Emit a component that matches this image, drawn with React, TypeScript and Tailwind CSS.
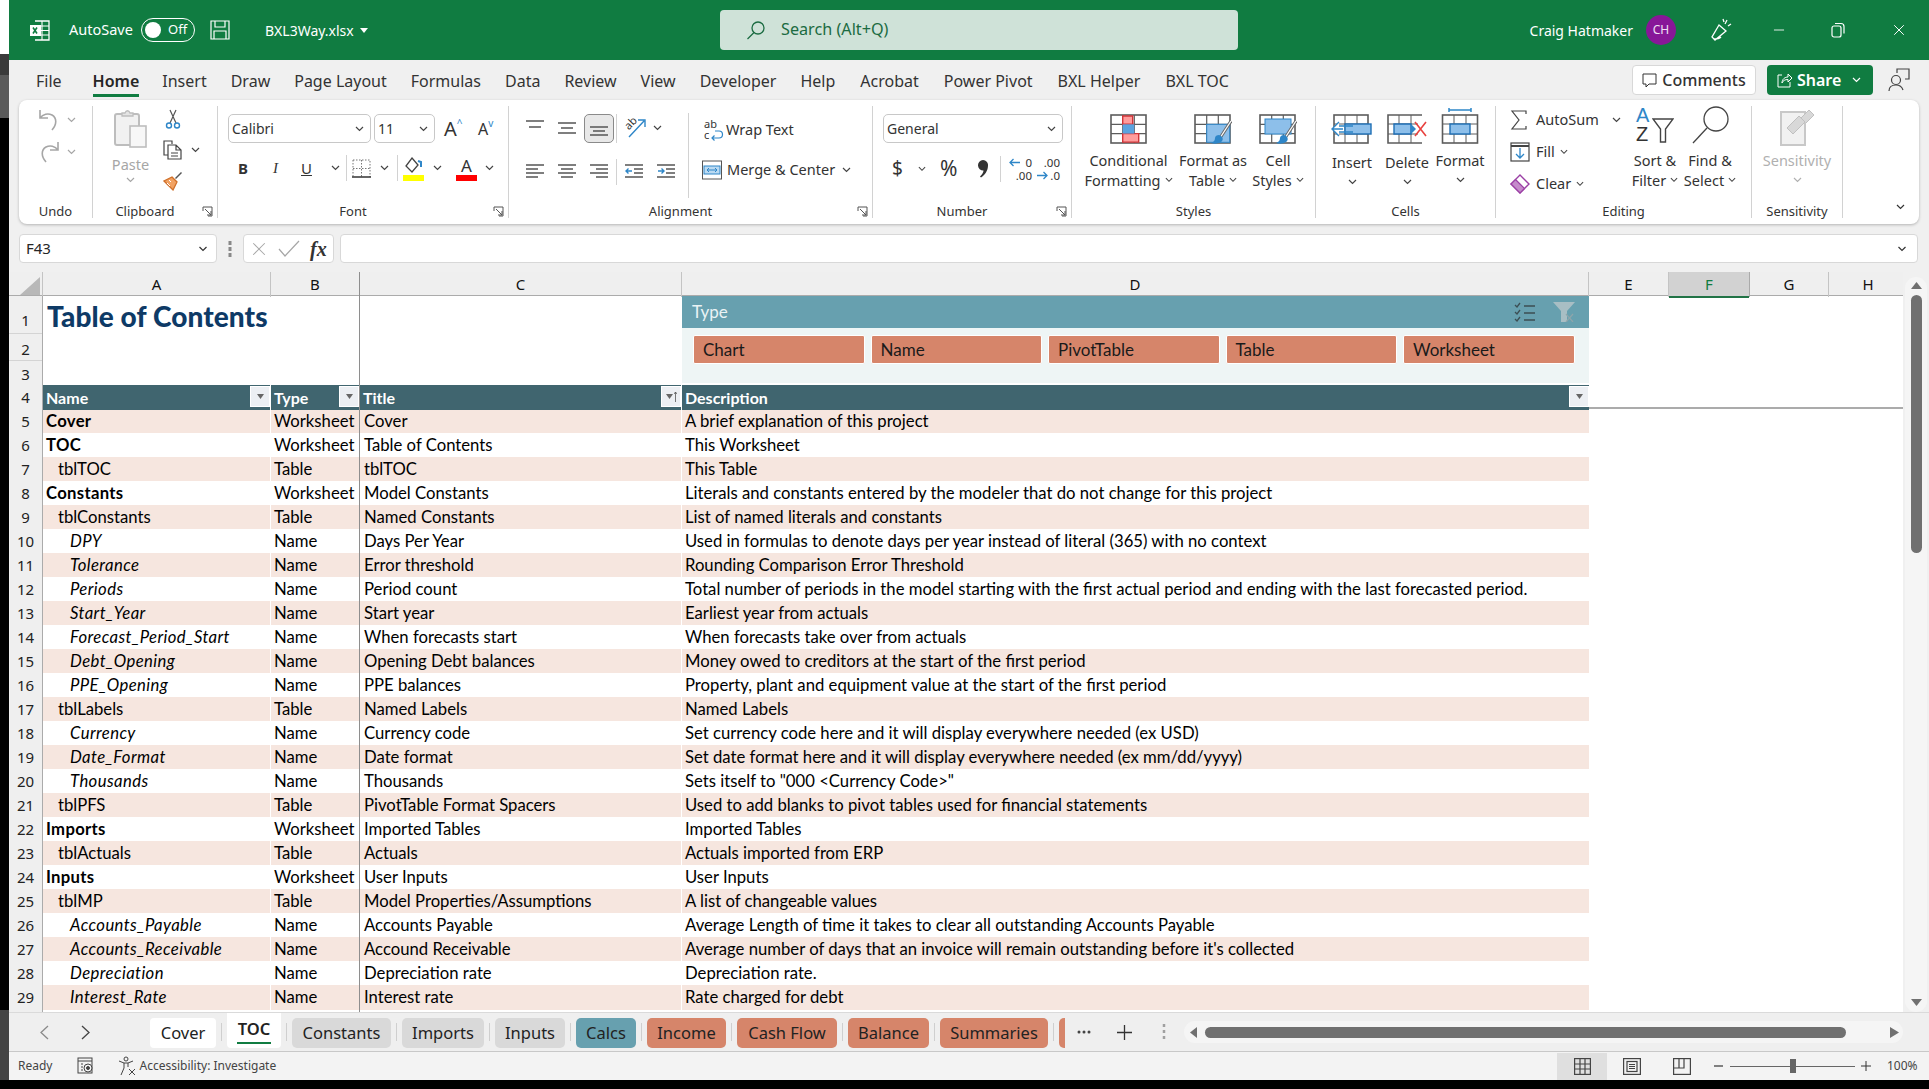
import React from 'react';
import { X, Minus } from 'lucide-react';

type Row = { n: number; a: string; b: string; c: string; d: string; k: 0 | 1 | 2 };
const rows: Row[] = [
  { n: 5, a: 'Cover', b: 'Worksheet', c: 'Cover', d: 'A brief explanation of this project', k: 0 },
  { n: 6, a: 'TOC', b: 'Worksheet', c: 'Table of Contents', d: 'This Worksheet', k: 0 },
  { n: 7, a: 'tblTOC', b: 'Table', c: 'tblTOC', d: 'This Table', k: 1 },
  { n: 8, a: 'Constants', b: 'Worksheet', c: 'Model Constants', d: 'Literals and constants entered by the modeler that do not change for this project', k: 0 },
  { n: 9, a: 'tblConstants', b: 'Table', c: 'Named Constants', d: 'List of named literals and constants', k: 1 },
  { n: 10, a: 'DPY', b: 'Name', c: 'Days Per Year', d: 'Used in formulas to denote days per year instead of literal (365) with no context', k: 2 },
  { n: 11, a: 'Tolerance', b: 'Name', c: 'Error threshold', d: 'Rounding Comparison Error Threshold', k: 2 },
  { n: 12, a: 'Periods', b: 'Name', c: 'Period count', d: 'Total number of periods in the model starting with the first actual period and ending with the last forecasted period.', k: 2 },
  { n: 13, a: 'Start_Year', b: 'Name', c: 'Start year', d: 'Earliest year from actuals', k: 2 },
  { n: 14, a: 'Forecast_Period_Start', b: 'Name', c: 'When forecasts start', d: 'When forecasts take over from actuals', k: 2 },
  { n: 15, a: 'Debt_Opening', b: 'Name', c: 'Opening Debt balances', d: 'Money owed to creditors at the start of the first period', k: 2 },
  { n: 16, a: 'PPE_Opening', b: 'Name', c: 'PPE balances', d: 'Property, plant and equipment value at the start of the first period', k: 2 },
  { n: 17, a: 'tblLabels', b: 'Table', c: 'Named Labels', d: 'Named Labels', k: 1 },
  { n: 18, a: 'Currency', b: 'Name', c: 'Currency code', d: 'Set currency code here and it will display everywhere needed (ex USD)', k: 2 },
  { n: 19, a: 'Date_Format', b: 'Name', c: 'Date format', d: 'Set date format here and it will display everywhere needed (ex mm/dd/yyyy)', k: 2 },
  { n: 20, a: 'Thousands', b: 'Name', c: 'Thousands', d: 'Sets itself to "000 <Currency Code>"', k: 2 },
  { n: 21, a: 'tblPFS', b: 'Table', c: 'PivotTable Format Spacers', d: 'Used to add blanks to pivot tables used for financial statements', k: 1 },
  { n: 22, a: 'Imports', b: 'Worksheet', c: 'Imported Tables', d: 'Imported Tables', k: 0 },
  { n: 23, a: 'tblActuals', b: 'Table', c: 'Actuals', d: 'Actuals imported from ERP', k: 1 },
  { n: 24, a: 'Inputs', b: 'Worksheet', c: 'User Inputs', d: 'User Inputs', k: 0 },
  { n: 25, a: 'tblMP', b: 'Table', c: 'Model Properties/Assumptions', d: 'A list of changeable values', k: 1 },
  { n: 26, a: 'Accounts_Payable', b: 'Name', c: 'Accounts Payable', d: 'Average Length of time it takes to clear all outstanding Accounts Payable', k: 2 },
  { n: 27, a: 'Accounts_Receivable', b: 'Name', c: 'Accound Receivable', d: "Average number of days that an invoice will remain outstanding before it's collected", k: 2 },
  { n: 28, a: 'Depreciation', b: 'Name', c: 'Depreciation rate', d: 'Depreciation rate.', k: 2 },
  { n: 29, a: 'Interest_Rate', b: 'Name', c: 'Interest rate', d: 'Rate charged for debt', k: 2 },
];

const Chev = ({ c = '#444', w = 9 }: { c?: string; w?: number }) => (
  <svg width={w} height={6} viewBox="0 0 9 6" fill="none" className="shrink-0"><path d="M1 1l3.5 3.5L8 1" stroke={c} strokeWidth="1.2" /></svg>
);

const Launcher = () => (
  <svg width="11" height="11" viewBox="0 0 11 11" fill="none" className="absolute right-[4px] bottom-[1px]">
    <path d="M1 5V1h9v9H6M3 3l6 6M9 5v4H5" stroke="#555" strokeWidth="1" />
  </svg>
);

const Tbl = ({ children }: { children?: React.ReactNode }) => (
  <svg width="38" height="30" viewBox="0 0 38 30" fill="none">
    <rect x="1" y="1" width="35" height="28" stroke="#5c5c5c" strokeWidth="1.6" fill="#fff" />
    <path d="M12.7 1v28M24.3 1v28M1 10.3h35M1 19.6h35" stroke="#5c5c5c" strokeWidth="1.2" />
    {children}
  </svg>
);
const Brush = () => (
  <g>
    <path d="M37 7L26 24" stroke="#666" strokeWidth="3.2" />
    <path d="M37 7L26 24" stroke="#fff" strokeWidth="1.3" />
    <path d="M25 21c4 1 5 5 2 7-3 2-7 2-10 1 3-1 4-3 4-5s2-3 4-3z" fill="#2E86C8" />
  </g>
);

const AlignI = ({ l }: { l: string }) => (
  <svg width="18" height="18" viewBox="0 0 18 18" fill="none"><path d={l} stroke="#555" strokeWidth="1.4" /></svg>
);

const Big = ({ icon, a, b, chev, tall, w }: { icon: React.ReactNode; a: string; b?: string; chev?: boolean; tall?: boolean; w: string }) => (
  <div className={`${w} flex flex-col items-center`}>
    <div className={tall ? 'h-[36px] mt-[2px] flex items-end' : 'h-[30px] mt-[8px] flex items-end'}>{icon}</div>
    <div className="h-[6px]" />
    <div className="h-[20px] leading-[20px] whitespace-nowrap">{a}</div>
    <div className="h-[20px] leading-[20px] whitespace-nowrap flex items-center gap-[4px]">
      {b}{chev && <Chev w={8} />}
    </div>
  </div>
);

const Group = ({ w, label, launcher, children, noBorder }: { w: string; label: string; launcher?: boolean; children: React.ReactNode; noBorder?: boolean }) => (
  <div className={`${w} shrink-0 flex flex-col ${noBorder ? '' : 'border-r border-[#D2D2D2]'} relative`}>
    <div className="flex-1 flex min-h-0">{children}</div>
    <div className={`h-[17px] leading-[21px] text-center text-[13px] text-[#333] ${launcher ? 'pr-[20px]' : ''}`}>{label}</div>
    {launcher && <Launcher />}
  </div>
);

const Sel = ({ w, t }: { w: string; t: string }) => (
  <div className={`${w} h-[29px] border border-[#C8C8C8] rounded-[5px] bg-white flex items-center justify-between pl-[3px] pr-[6px] text-[14px] text-[#333]`}>
    <span>{t}</span><Chev />
  </div>
);

const Filter = ({ sort }: { sort?: boolean }) => (
  <div className="absolute right-0 top-[1px] w-[20px] h-[21px] bg-[#ECEFF3] border border-white flex items-center justify-center gap-[1px]">
    <svg width="7" height="5" viewBox="0 0 7 5"><path d="M0 0h7L3.5 5z" fill="#666" /></svg>
    {sort && <svg width="3" height="10" viewBox="0 0 3 10"><path d="M1.5 0v10M0 2l1.5-2L3 2" stroke="#555" fill="none" strokeWidth=".8" /></svg>}
  </div>
);

const tabs = [
  { t: 'Constants', w: 'w-[99px]', c: 'bg-[#D9D9D9]' },
  { t: 'Imports', w: 'w-[82px]', c: 'bg-[#D9D9D9]' },
  { t: 'Inputs', w: 'w-[70px]', c: 'bg-[#D9D9D9]' },
  { t: 'Calcs', w: 'w-[60px]', c: 'bg-[#67A0AF]' },
  { t: 'Income', w: 'w-[79px]', c: 'bg-[#D6856A]' },
  { t: 'Cash Flow', w: 'w-[100px]', c: 'bg-[#D6856A]' },
  { t: 'Balance', w: 'w-[81px]', c: 'bg-[#D6856A]' },
  { t: 'Summaries', w: 'w-[108px]', c: 'bg-[#D6856A]' },
];

const menu = ['Insert', 'Draw', 'Page Layout', 'Formulas', 'Data', 'Review', 'View', 'Developer', 'Help'];
const menu2 = ['Acrobat', 'Power Pivot', 'BXL Helper', 'BXL TOC'];
const cols = 'grid grid-cols-[34px_228px_89px_322px_907px_80px_81px_79px_74px]';
const cal = "[font-family:Lato,'Liberation_Sans',sans-serif]";

export default function App() {
  return (
    <div className="w-[1929px] h-[1089px] bg-black flex overflow-hidden [font-family:'Noto_Sans',sans-serif] text-[#262626]">
      {/* desktop sliver */}
      <div className="w-[9px] shrink-0 flex flex-col">
        <div className="h-[54px] bg-white" />
        <div className="h-[21px] bg-[#3A3A3A]" />
        <div className="h-[43px] bg-[#5A5A5A]" />
        <div className="h-[892px] bg-black" />
        <div className="h-[70px] bg-[#444]" />
      </div>

      <div className="w-[1920px] flex flex-col">
        {/* title bar */}
        <div className="h-[60px] bg-[#107C41] flex items-center text-white text-[14px] relative shrink-0">
          <svg width="21" height="21" viewBox="0 0 21 21" fill="none" className="ml-[20px]">
            <path d="M6 1h14v19H6" stroke="#fff" strokeWidth="1.3" /><path d="M13 1v19M6 6h14M6 10.500h14M6 15h14" stroke="#fff" strokeWidth="1.1" />
            <rect x="1" y="5" width="11" height="11" fill="#fff" />
            <path d="M4 7.500l4 6M8 7.500l-4 6" stroke="#107C41" strokeWidth="1.600" />
          </svg>
          <span className="ml-[19px] w-[66px] text-[14.500px]">AutoSave</span>
          <div className="ml-[6px] w-[54px] h-[24px] rounded-full border border-white flex items-center pl-[3px] gap-[7px]">
            <div className="w-[16px] h-[16px] rounded-full bg-white" />
            <span className="text-[13px]">Off</span>
          </div>
          <svg width="20" height="20" viewBox="0 0 20 20" fill="none" className="ml-[15px]">
            <path d="M1 1h18v18H1z M5 1v6h10V1 M4 19v-8h12v8" stroke="#fff" strokeWidth="1.2" />
          </svg>
          <span className="ml-[35px]">BXL3Way.xlsx</span>
          <svg width="8" height="5" viewBox="0 0 8 5" className="ml-[6px]"><path d="M0 0h8L4 5z" fill="#fff" /></svg>
          <div className="absolute left-[711px] top-[10px] w-[518px] h-[40px] rounded-[4px] bg-[#CFE2D8] flex items-center pl-[26px] text-[16.200px]">
            <svg width="20" height="20" viewBox="0 0 20 20" fill="none"><circle cx="12" cy="8" r="6" stroke="#1b6b41" strokeWidth="1.3" /><path d="M8 12.500L1.500 19" stroke="#1b6b41" strokeWidth="1.3" /></svg>
            <span className="ml-[15px] text-[#1b6b41] -mt-[2px]">Search (Alt+Q)</span>
          </div>
          <div className="ml-auto flex items-center">
            <span>Craig Hatmaker</span>
            <div className="ml-[13px] w-[30px] h-[30px] rounded-full bg-[#881798] flex items-center justify-center text-[12px] text-[#F0E0F4]">CH</div>
            <svg width="24" height="24" viewBox="0 0 24 24" fill="none" className="ml-[33px]" stroke="#fff" strokeWidth="1.3">
              <path d="M10 7L3 19l3 3 11-9zM5 21c2 0 5 0 7-2M16 6l2-4M19 8l3-2M15 4l-1-3" />
            </svg>
            <Minus size={16} strokeWidth={1.3} className="ml-[38px]" />
            <svg width="14" height="16" viewBox="0 0 14 16" fill="none" className="ml-[44px]" stroke="#fff" strokeWidth="1.2">
              <rect x="1" y="4" width="9" height="11" rx="2" /><path d="M4 1.500h6a3 3 0 013 3v7" />
            </svg>
            <X size={18} strokeWidth={1.3} className="ml-[45px] mr-[21px]" />
          </div>
        </div>

        {/* ribbon area */}
        <div className="bg-[#F0F0F0] h-[212px] shrink-0 flex flex-col">
          <div className="h-[40px] flex items-center text-[16px] text-[#333] pl-[27px] shrink-0">
            <span className="pt-[1px]">File</span>
            <div className="relative ml-[31px] h-[40px] flex items-center font-semibold text-[#262626] pt-[1px]">
              Home<div className="absolute left-0 right-0 bottom-[3px] h-[3px] bg-[#107C41]" />
            </div>
            <div className="flex items-center gap-[24px] ml-[23px] pt-[1px]">
              {menu.map(m => <span key={m}>{m}</span>)}
            </div>
            <div className="flex items-center gap-[25px] ml-[25px] pt-[1px]">
              {menu2.map(m => <span key={m}>{m}</span>)}
            </div>
            <div className="ml-auto flex items-center">
              <div className="w-[124px] h-[30px] bg-white border border-[#D8D8D8] rounded-[4px] flex items-center justify-center gap-[5px] font-medium">
                <svg width="15" height="15" viewBox="0 0 15 15" fill="none"><path d="M1 1h13v10H7l-3 3v-3H1z" stroke="#333" strokeWidth="1" /></svg>
                Comments
              </div>
              <div className="ml-[11px] w-[106px] h-[30px] bg-[#107C41] rounded-[4px] text-white flex items-center pl-[10px] font-semibold">
                <svg width="15" height="16" viewBox="0 0 15 16" fill="none" className="mr-[5px]"><path d="M5 3H1v12h12v-5M5 11c0-4 3-6 6-6V2l4 4-4 4V7.500c-3 0-5 1-6 3.500z" stroke="#fff" strokeWidth="1" /></svg>
                Share
                <span className="ml-[9px]"><Chev c="#fff" w={13} /></span>
              </div>
              <svg width="22" height="24" viewBox="0 0 22 24" fill="none" className="ml-[15px] mr-[19px]" stroke="#444" strokeWidth="1.2">
                <circle cx="8" cy="12" r="4.500" /><path d="M1 23c0-4 3-6 7-6s6 2 7 5M9 5V1h12v10h-4" />
              </svg>
            </div>
          </div>

          <div className="ml-[10px] w-[1900px] h-[124px] rounded-[8px] bg-white shadow-[0_1px_3px_rgba(0,0,0,0.25)] py-[6px] flex text-[14.500px] text-[#333] shrink-0">
            {/* Undo */}
            <Group w="w-[74px]" label="Undo">
              <div className="pl-[20px] pt-[2px] flex flex-col gap-[9px]">
                <div className="flex items-center gap-[8px]">
                  <svg width="20" height="23" viewBox="0 0 20 23" fill="none" stroke="#A6A6A6" strokeWidth="1.6"><path d="M1 2v8h8M1 10c3-4 8-5 12-3 5 3 5 9 0 15" /></svg>
                  <Chev c="#A6A6A6" />
                </div>
                <div className="flex items-center gap-[8px]">
                  <svg width="20" height="23" viewBox="0 0 20 23" fill="none" stroke="#A6A6A6" strokeWidth="1.6"><path d="M19 2v8h-8M19 10c-3-4-8-5-12-3-5 3-5 9 0 15" /></svg>
                  <Chev c="#A6A6A6" />
                </div>
              </div>
            </Group>
            {/* Clipboard */}
            <Group w="w-[125px]" label="Clipboard" launcher>
              <div className="pl-[5px] w-[70px] flex flex-col items-center">
                <svg width="35" height="40" viewBox="0 0 35 40" fill="none" className="mt-[3px]">
                  <rect x="2" y="5" width="24" height="31" rx="2" fill="#F1F1F1" stroke="#BDBDBD" strokeWidth="2" />
                  <path d="M9 7V4h3c1-3 4-3 5 0h3v3z" fill="#E4E4E4" stroke="#BDBDBD" strokeWidth="1.3" />
                  <rect x="17" y="17" width="16" height="21" fill="#F7F7F7" stroke="#BDBDBD" strokeWidth="1.6" />
                </svg>
                <span className="mt-[5px] text-[#A6A6A6] leading-[20px]">Paste</span>
                <span className="mt-[3px]"><Chev c="#A6A6A6" /></span>
              </div>
              <div className="flex flex-col gap-[11px] pt-[3px]">
                <svg width="20" height="20" viewBox="0 0 20 20" fill="none">
                  <path d="M7 1l6 13M13 1L7 14" stroke="#555" strokeWidth="1.200" /><circle cx="6" cy="16.500" r="2.500" stroke="#2E86C8" strokeWidth="1.400" /><circle cx="14" cy="16.500" r="2.500" stroke="#2E86C8" strokeWidth="1.400" />
                </svg>
                <div className="flex items-center gap-[8px]">
                  <svg width="20" height="20" viewBox="0 0 20 20" fill="none" stroke="#444" strokeWidth="1.200"><path d="M5 15H1V1h8l0 3" /><path d="M5 5h8l5 5v9H5zM13 5v5h5M8 13h7M8 16h7" /></svg>
                  <Chev />
                </div>
                <svg width="20" height="20" viewBox="0 0 20 20" fill="none">
                  <path d="M19 2l-1-1-6 6 1 1z" fill="#555" /><path d="M9 6l5 5-4 8-9-9z" fill="#F2A262" stroke="#D0702A" strokeWidth="1.300" /><path d="M6 9l2 2M4 12l3 3" stroke="#fff" />
                </svg>
              </div>
            </Group>
            {/* Font */}
            <Group w="w-[291px]" label="Font" launcher>
              <div className="pl-[10px] pt-[8px] flex flex-col w-full">
                <div className="flex items-center">
                  <Sel w="w-[143px]" t="Calibri" />
                  <div className="w-[3px]" />
                  <Sel w="w-[61px]" t="11" />
                  <div className="ml-[9px] flex items-start w-[19px] text-[20px] leading-[24px]">A<span className="text-[#2E86C8] text-[10px] leading-[12px]">^</span></div>
                  <div className="ml-[15px] flex items-start w-[19px] text-[16px] leading-[24px]">A<span className="text-[#2E86C8] text-[10px] leading-[12px]">v</span></div>
                </div>
                <div className="flex items-center mt-[12px] h-[26px]">
                  <span className="ml-[10px] w-[10px] font-bold text-[15px]">B</span>
                  <span className="ml-[25px] w-[8px] italic text-[15px] [font-family:'Liberation_Serif',serif]">I</span>
                  <span className="ml-[20px] w-[11px] underline text-[15px]">U</span>
                  <span className="ml-[19px]"><Chev /></span>
                  <div className="ml-[6px] w-px h-[26px] bg-[#D2D2D2]" />
                  <svg width="19" height="19" viewBox="0 0 19 19" fill="none" className="ml-[5px]"><path d="M1 1h17v17M1 1v17M9.500 1v17M1 9.500h17" stroke="#777" strokeDasharray="1.500 1.500" /><path d="M0 18h19" stroke="#333" strokeWidth="1.500" /></svg>
                  <span className="ml-[9px]"><Chev /></span>
                  <div className="ml-[8px] w-px h-[26px] bg-[#D2D2D2]" />
                  <svg width="21" height="25" viewBox="0 0 21 25" fill="none" className="ml-[5px]"><path d="M9 2l6 7-6 7-6-6z" stroke="#444" strokeWidth="1.300" /><path d="M15 5l3 1v5" stroke="#2E86C8" strokeWidth="2" /><rect x="0" y="19" width="21" height="6" fill="#FFFF00" /></svg>
                  <span className="ml-[9px]"><Chev /></span>
                  <div className="ml-[14px] w-[21px] flex flex-col items-center text-[17px] leading-[19px]">A<div className="w-[21px] h-[6px] bg-[#FF0000]" /></div>
                  <span className="ml-[8px]"><Chev /></span>
                </div>
              </div>
            </Group>
            {/* Alignment */}
            <Group w="w-[364px]" label="Alignment" launcher>
              <div className="w-[180px] h-[85px] shrink-0 mt-[7px] border-r border-[#D2D2D2] pl-[17px] flex flex-col">
                <div className="flex items-center h-[30px]">
                  <AlignI l="M0 2h18M3 8h12" />
                  <div className="w-[14px]" />
                  <AlignI l="M0 4h18M3 9h12M0 14h18" />
                  <div className="ml-[8px] w-[30px] h-[29px] rounded-[5px] border border-[#8A8A8A] bg-[#E8E8E8] flex items-center justify-center"><AlignI l="M0 8h18M3 12h12M0 16h18" /></div>
                  <div className="ml-[2px] w-px h-[29px] bg-[#D2D2D2]" />
                  <div className="ml-[7px] w-[22px] h-[22px] relative">
                    <svg width="22" height="22" viewBox="0 0 22 22" fill="none"><path d="M5 20L20 4M14 3h7v7" stroke="#2E86C8" strokeWidth="1.400" /></svg>
                    <span className="absolute left-0 top-[-1px] text-[11px] leading-[14px] -rotate-45">ab</span>
                  </div>
                  <span className="ml-[7px]"><Chev /></span>
                </div>
                <div className="flex items-center h-[30px] mt-[14px]">
                  <AlignI l="M0 2h18M0 6h12M0 10h18M0 14h12" />
                  <div className="w-[14px]" />
                  <AlignI l="M0 2h18M3 6h12M0 10h18M3 14h12" />
                  <div className="w-[14px]" />
                  <AlignI l="M0 2h18M6 6h12M0 10h18M6 14h12" />
                  <div className="ml-[8px] w-px h-[26px] bg-[#D2D2D2]" />
                  <svg width="18" height="18" viewBox="0 0 18 18" fill="none" className="ml-[8px]"><path d="M0 2h18M9 6h9M9 10h9M0 14h18" stroke="#555" strokeWidth="1.400" /><path d="M7 8H1M3.500 5.500L1 8l2.500 2.500" stroke="#2E86C8" strokeWidth="1.400" /></svg>
                  <svg width="18" height="18" viewBox="0 0 18 18" fill="none" className="ml-[14px]"><path d="M0 2h18M9 6h9M9 10h9M0 14h18" stroke="#555" strokeWidth="1.400" /><path d="M1 8h6M4.500 5.500L7 8l-2.500 2.500" stroke="#2E86C8" strokeWidth="1.400" /></svg>
                </div>
              </div>
              <div className="pl-[13px] pt-[11px] flex flex-col gap-[14px]">
                <div className="flex items-center h-[26px]">
                  <div className="ml-[2px] w-[20px] h-[22px] relative text-[11px] leading-[10px]">
                    <span className="block">ab</span><span className="block mt-[1px]">c</span>
                    <svg width="13" height="13" viewBox="0 0 13 13" fill="none" className="absolute right-0 bottom-0"><path d="M1 10h7a3.500 3.500 0 000-7H4M3.500 7.500L1 10l2.500 2.500" stroke="#2E86C8" strokeWidth="1.200" /></svg>
                  </div>
                  <span className="ml-[2px]">Wrap Text</span>
                </div>
                <div className="flex items-center h-[26px]">
                  <svg width="20" height="20" viewBox="0 0 20 20" fill="none"><rect x=".5" y="1" width="19" height="18" stroke="#555" /><rect x="2" y="6" width="16" height="8" fill="#BBDAF2" stroke="#2E86C8" /><path d="M5 10h10M7 8l-2 2 2 2M13 8l2 2-2 2" stroke="#2E86C8" /></svg>
                  <span className="ml-[5px] w-[115px]">Merge &amp; Center</span>
                  <Chev />
                </div>
              </div>
            </Group>
            {/* Number */}
            <Group w="w-[199px]" label="Number" launcher>
              <div className="pl-[10px] pt-[8px] flex flex-col">
                <Sel w="w-[180px]" t="General" />
                <div className="flex items-center mt-[12px] h-[27px]">
                  <span className="ml-[9px] w-[12px] text-[19px] leading-none">$</span>
                  <span className="ml-[14px]"><Chev w={8} /></span>
                  <span className="ml-[14px] w-[22px] text-[21px] leading-none">%</span>
                  <svg width="10" height="18" viewBox="0 0 10 18" className="ml-[16px]"><path d="M5 0a5 5 0 015 5.500c0 5-3 9.500-7 12l-1-1c2-2 3.500-4 3.500-6A5 5 0 015 0z" fill="#333" /></svg>
                  <div className="ml-[12px] w-px h-[26px] bg-[#D2D2D2]" />
                  <div className="ml-[8px] w-[23px] h-[24px] relative text-[11.500px] leading-[11px] text-right">
                    <span className="block">0</span>
                    <span className="block mt-[2px]">.00</span>
                    <svg width="11" height="9" viewBox="0 0 11 9" fill="none" className="absolute left-0 top-[1px]"><path d="M11 4.500H1M4.500 1L1 4.500 4.500 8" stroke="#2E86C8" strokeWidth="1.300" /></svg>
                  </div>
                  <div className="ml-[5px] w-[23px] h-[24px] relative text-[11.500px] leading-[11px] text-right">
                    <span className="block">.00</span>
                    <span className="block mt-[2px]">.0</span>
                    <svg width="11" height="9" viewBox="0 0 11 9" fill="none" className="absolute left-0 bottom-[1px]"><path d="M0 4.500h10M6.500 1L10 4.500 6.500 8" stroke="#2E86C8" strokeWidth="1.300" /></svg>
                  </div>
                </div>
              </div>
            </Group>
            {/* Styles */}
            <Group w="w-[244px]" label="Styles">
              <div className="pl-[14px] flex">
                <Big w="w-[85px]" a="Conditional" b="Formatting" chev icon={
                  <Tbl><path d="M12.700 2h10v8.300h-10zM12.700 19.600h16v8.500h-16z" fill="#FF9C9C" stroke="#D13438" strokeWidth="1.400" /><rect x="12.700" y="10.300" width="11.600" height="9.300" fill="#5BA3DF" /></Tbl>
                } />
                <Big w="w-[84px]" a="Format as" b="Table" chev icon={
                  <Tbl><rect x="12.700" y="10.300" width="23" height="18" fill="#8DBFEA" stroke="#2E86C8" /><Brush /></Tbl>
                } />
                <Big w="w-[46px]" a="Cell" b="Styles" chev icon={
                  <Tbl><rect x="6" y="5" width="26" height="15" fill="#8DBFEA" stroke="#2E86C8" /><Brush /></Tbl>
                } />
              </div>
            </Group>
            {/* Cells */}
            <Group w="w-[180px]" label="Cells">
              <div className="pl-[9px] flex">
                <div className="w-[54px] flex flex-col items-center">
                  <div className="h-[30px] mt-[8px]"><svg width="42" height="30" viewBox="0 0 42 30" fill="none"><rect x="3" y="1" width="34" height="28" stroke="#5c5c5c" strokeWidth="1.600" /><path d="M14 1v28M26 1v28M3 10h34M3 20h34" stroke="#5c5c5c" /><rect x="14" y="10" width="26" height="10" fill="#8DBFEA" stroke="#1F6FB5" strokeWidth="1.400" /><path d="M12 15H2M8 8l-7 7 7 7M8 12h14M8 18h14" stroke="#2E86C8" strokeWidth="1.400" fill="#fff" /></svg></div>
                  <div className="h-[8px]" /><div className="leading-[20px]">Insert</div><div className="leading-[20px] h-[20px] flex items-center"><Chev /></div>
                </div>
                <div className="w-[56px] flex flex-col items-center">
                  <div className="h-[30px] mt-[8px]"><svg width="40" height="30" viewBox="0 0 40 30" fill="none"><path d="M35 1H1v28h34" stroke="#5c5c5c" strokeWidth="1.600" /><path d="M12 1v28M24 1v28M1 10h30M1 20h30" stroke="#5c5c5c" /><path d="M7 10h17v10H7z" fill="#8DBFEA" stroke="#1F6FB5" strokeWidth="1.400" /><path d="M24 10l5 5-5 5z" fill="#2E86C8" /><path d="M28 8l11 14M39 8L28 22" stroke="#E8423F" strokeWidth="1.600" /></svg></div>
                  <div className="h-[8px]" /><div className="leading-[20px]">Delete</div><div className="leading-[20px] h-[20px] flex items-center"><Chev /></div>
                </div>
                <div className="w-[50px] flex flex-col items-center">
                  <div className="h-[36px] mt-[2px]"><svg width="38" height="36" viewBox="0 0 38 36" fill="none"><path d="M8 2h22M8 0v4M30 0v4" stroke="#2E86C8" strokeWidth="1.500" /><rect x="1.500" y="7" width="35" height="28" stroke="#5c5c5c" strokeWidth="1.600" /><path d="M13 7v28M25 7v28M1 16h36M1 26h36" stroke="#5c5c5c" /><rect x="9" y="16" width="20" height="10" fill="#8DBFEA" stroke="#1F6FB5" strokeWidth="1.400" /></svg></div>
                  <div className="h-[6px]" /><div className="leading-[20px]">Format</div><div className="leading-[20px] h-[20px] flex items-center"><Chev /></div>
                </div>
              </div>
            </Group>
            {/* Editing */}
            <Group w="w-[256px]" label="Editing">
              <div className="pl-[14px] w-[134px] shrink-0 flex flex-col gap-[8px] pt-[2px]">
                <div className="flex items-center h-[24px]">
                  <svg width="18" height="20" viewBox="0 0 18 20" fill="none"><path d="M16 4V1H2l7 9-7 9h14v-3" stroke="#444" strokeWidth="1.200" /></svg>
                  <span className="ml-[8px] w-[76px]">AutoSum</span>
                  <Chev />
                </div>
                <div className="flex items-center h-[24px]">
                  <svg width="20" height="20" viewBox="0 0 20 20" fill="none"><rect x="1" y="1" width="18" height="18" stroke="#444" strokeWidth="1.200" /><path d="M1 4h18" stroke="#444" strokeWidth="2" /><path d="M10 6v10M6 12l4 4 4-4" stroke="#2E86C8" strokeWidth="1.300" /></svg>
                  <span className="ml-[6px] mr-[5px]">Fill</span><Chev w={8} />
                </div>
                <div className="flex items-center h-[24px]">
                  <svg width="20" height="20" viewBox="0 0 20 20" fill="none"><path d="M10 1l9 9-9 9-9-9z" fill="#fff" stroke="#9B3FA5" strokeWidth="1.400" /><path d="M5.500 5.500l9 9L10 19l-9-9z" fill="#C58BCB" stroke="#9B3FA5" strokeWidth="1.200" /></svg>
                  <span className="ml-[6px] mr-[5px]">Clear</span><Chev w={8} />
                </div>
              </div>
              <Big w="w-[50px]" tall a="Sort &" b="Filter" chev icon={
                <div className="w-[38px] h-[38px] flex">
                  <div className="w-[16px] flex flex-col text-[20px] leading-[19px] [font-family:'Liberation_Sans',sans-serif]">
                    <span className="text-[#2E86C8]">A</span><span>Z</span>
                  </div>
                  <svg width="22" height="26" viewBox="0 0 22 26" fill="none" className="mt-[12px]"><path d="M1 1h20l-7.500 10v13h-5V11z" stroke="#444" strokeWidth="1.400" /></svg>
                </div>
              } />
              <Big w="w-[60px]" tall a="Find &" b="Select" chev icon={
                <svg width="38" height="38" viewBox="0 0 38 38" fill="none"><circle cx="25" cy="13" r="12" stroke="#444" strokeWidth="1.300" /><path d="M16 22L2 37" stroke="#444" strokeWidth="1.300" /></svg>
              } />
            </Group>
            {/* Sensitivity */}
            <Group w="w-[91px]" label="Sensitivity">
              <div className="w-full flex flex-col items-center text-[#B0B0B0]">
                <svg width="36" height="38" viewBox="0 0 36 38" fill="none" className="mt-[2px]">
                  <rect x="2" y="4" width="24" height="33" fill="#F1F1F1" stroke="#C8C8C8" strokeWidth="2" />
                  <path d="M8 20l12-12 6 6-12 12zM22 10l8-8 5 5-8 8" fill="#D8D8D8" stroke="#C0C0C0" />
                </svg>
                <div className="h-[4px]" />
                <div className="leading-[20px]">Sensitivity</div>
                <div className="h-[20px] flex items-center"><Chev c="#B0B0B0" /></div>
              </div>
            </Group>
            <div className="flex-1 flex items-end justify-center pb-[8px] pl-[38px]"><Chev w={13} c="#333" /></div>
          </div>

          {/* formula bar */}
          <div className="mt-[10px] ml-[10px] h-[29px] flex items-center text-[15px] shrink-0">
            <div className="w-[198px] h-[29px] bg-white border border-[#D8D8D8] rounded-[4px] flex items-center justify-between pl-[6px] pr-[7px]"><span>F43</span><Chev c="#333" w={12} /></div>
            <svg width="4" height="16" viewBox="0 0 4 16" className="ml-[11px]"><path d="M2 0v4M2 6v4M2 12v4" stroke="#888" strokeWidth="3" /></svg>
            <div className="ml-[11px] w-[91px] h-[29px] bg-white border border-[#D8D8D8] rounded-[4px] flex items-center pl-[4px]">
              <X size={22} strokeWidth={1.1} color="#A6A6A6" />
              <svg width="22" height="18" viewBox="0 0 22 18" fill="none" className="ml-[8px]"><path d="M1 9l6 7L21 1" stroke="#A6A6A6" strokeWidth="1.200" /></svg>
              <span className="ml-[10px] italic font-bold text-[20px] [font-family:'Liberation_Serif',serif] text-[#333]">fx</span>
            </div>
            <div className="ml-[6px] w-[1578px] h-[29px] bg-white border border-[#D8D8D8] rounded-[4px] flex items-center justify-end pr-[9px]"><Chev c="#333" w={12} /></div>
          </div>
        </div>

        {/* sheet */}
        <div className="h-[740px] flex bg-[#F0F0F0] shrink-0 overflow-hidden">
          <div className="w-[1894px] flex flex-col bg-white shrink-0">
            <div className={`${cols} h-[24px] bg-[#EFEFEF] text-[15px] leading-[25px] text-[#111] border-b border-[#ABABAB]`}>
              <div className="border-r border-[#C4C4C4] flex items-end justify-end">
                <svg width="20" height="18" viewBox="0 0 20 18" className="mr-[2px] mb-[2px]"><path d="M20 0v18H0z" fill="#B8B8B8" /></svg>
              </div>
              {['A', 'B', 'C', 'D', 'E'].map(c => (
                <div key={c} className={`text-center border-r ${c === 'B' ? 'border-[#8E8E8E]' : 'border-[#C4C4C4]'}`}>{c}</div>
              ))}
              <div className="text-center bg-[#D2D2D2] border-r border-[#AAA] text-[#107C41] relative">F<div className="absolute left-0 right-0 bottom-[-1px] h-[2px] bg-[#217346]" /></div>
              <div className="text-center border-r border-[#C4C4C4]">G</div>
              <div className="text-center pl-[4px]">H</div>
            </div>

            {/* rows 1-3 */}
            <div className="flex h-[89px] shrink-0">
              <div className="w-[34px] shrink-0 flex flex-col bg-[#EFEFEF] border-r border-[#ABABAB] text-[15px] text-[#222] items-stretch">
                <div className="h-[38px] flex items-end justify-center pb-[2px] border-b border-[#D4D4D4]">1</div>
                <div className="h-[27px] flex items-end justify-center border-b border-[#D4D4D4]">2</div>
                <div className="h-[24px] flex items-end justify-center">3</div>
              </div>
              <div className={`w-[317px] shrink-0 border-r border-[#8E8E8E] pl-[4px] pt-[6px] text-[28px] font-black tracking-[0.1px] leading-[28px] text-[#0E3A66] ${cal}`}>Table of Contents</div>
              <div className="w-[322px] shrink-0" />
              <div className={`w-[907px] shrink-0 h-[87px] flex flex-col bg-[#EEF5F5] ${cal} text-[17px]`}>
                <div className="h-[32px] bg-[#67A0AF] text-[#EAF3F5] flex items-center pl-[10px]">
                  Type
                  <svg width="22" height="20" viewBox="0 0 22 20" fill="none" className="ml-auto" stroke="#3C4E53" strokeWidth="1.300"><path d="M1 3l2 2 3-4M1 10l2 2 3-4M1 17l2 2 3-4M10 4h11M10 11h11M10 18h11" /></svg>
                  <svg width="22" height="20" viewBox="0 0 22 20" className="ml-[17px] mr-[14px]"><path d="M0 0h22l-8 9v11H8V9z" fill="#A8BEC4" /><path d="M13 12l7 8M20 12l-7 8" stroke="#8FA5AB" strokeWidth="1.200" /></svg>
                </div>
                <div className="flex gap-[6px] pl-[11px] pt-[7px]">
                  {['Chart', 'Name', 'PivotTable', 'Table', 'Worksheet'].map(t => (
                    <div key={t} className="w-[171.500px] h-[29px] bg-[#D6856A] border border-white rounded-[2px] flex items-center pl-[9px] text-[#1a1a1a]">{t}</div>
                  ))}
                </div>
              </div>
            </div>

            {/* header row 4 */}
            <div className={`${cols} h-[24px] shrink-0 text-[16px] border-b-2 border-[#ABABAB] ${cal}`}>
              <div className="bg-[#EFEFEF] border-r border-[#ABABAB] flex items-center justify-center text-[15px] text-[#222] [font-family:'Noto_Sans',sans-serif]">4</div>
              <div className="relative bg-[#40656F] text-white font-bold pl-[3px] leading-[25px] border-r border-white">Name<Filter /></div>
              <div className="relative bg-[#40656F] text-white font-bold pl-[3px] leading-[25px] border-r border-[#8E8E8E]">Type<Filter /></div>
              <div className="relative bg-[#40656F] text-white font-bold pl-[3px] leading-[25px] border-r border-white">Title<Filter sort /></div>
              <div className="relative bg-[#40656F] text-white font-bold pl-[3px] leading-[25px]">Description<Filter /></div>
            </div>

            {rows.map(r => {
              const bg = r.n % 2 === 1 ? 'bg-[#F6E6DF]' : 'bg-white';
              const cn = r.k === 0 ? 'font-bold pl-[3px] tracking-[0.3px]' : r.k === 1 ? 'pl-[15px]' : 'italic pl-[27px] tracking-[0.4px]';
              return (
                <div key={r.n} className={`${cols} h-[24px] shrink-0 text-[16.700px] text-black leading-[25px] whitespace-nowrap ${cal}`}>
                  <div className="bg-[#EFEFEF] border-r border-[#ABABAB] border-b border-b-[#D4D4D4] text-center text-[15px] text-[#222] [font-family:'Noto_Sans',sans-serif]">{r.n}</div>
                  <div className={`${bg} ${cn} border-r border-b border-white overflow-hidden`}>{r.a}</div>
                  <div className={`${bg} pl-[3px] border-r border-r-[#8E8E8E] border-b border-b-white overflow-hidden`}>{r.b}</div>
                  <div className={`${bg} pl-[4px] border-r border-b border-white overflow-hidden`}>{r.c}</div>
                  <div className={`${bg} pl-[3px] border-b border-white overflow-hidden`}>{r.d}</div>
                </div>
              );
            })}
            <div className="flex h-[4px] shrink-0">
              <div className="w-[34px] bg-[#EFEFEF] border-r border-[#ABABAB]" />
              <div className="w-[317px] border-r border-[#8E8E8E]" />
            </div>
          </div>

          {/* vertical scrollbar */}
          <div className="flex-1 flex flex-col items-center pt-[5px] bg-[#F0F0F0]">
            <div className="w-[22px] flex-1 bg-[#F5F5F5] rounded-full flex flex-col items-center pt-[5px]">
              <svg width="11" height="7" viewBox="0 0 11 7"><path d="M0 7h11L5.500 0z" fill="#707070" /></svg>
              <div className="mt-[6px] w-[11px] h-[258px] rounded-full bg-[#707070]" />
              <div className="flex-1" />
              <svg width="11" height="7" viewBox="0 0 11 7" className="mb-[6px]"><path d="M0 0h11L5.500 7z" fill="#707070" /></svg>
            </div>
          </div>
        </div>

        {/* sheet tabs */}
        <div className="h-[40px] shrink-0 bg-[#EFEFEF] border-t border-[#DADADA] border-b border-b-[#C8C8C8] flex items-center text-[16.500px] text-[#222]">
          <svg width="9" height="15" viewBox="0 0 9 15" fill="none" className="ml-[31px]"><path d="M8 1L1 7.500 8 14" stroke="#8A8A8A" strokeWidth="1.300" /></svg>
          <svg width="9" height="15" viewBox="0 0 9 15" fill="none" className="ml-[32px]"><path d="M1 1l7 6.500L1 14" stroke="#444" strokeWidth="1.300" /></svg>
          <div className="ml-[60px] w-[66px] h-[30px] mt-[2px] bg-white rounded-[4px] flex items-center justify-center">Cover</div>
          <div className="mx-[5px] w-px h-[18px] bg-[#CFCFCF]" />
          <div className="w-[54px] h-[35px] -mt-[3px] bg-white rounded-b-[4px] flex flex-col items-center justify-center font-semibold leading-[22px]">
            TOC<div className="w-[34px] h-[2px] bg-[#107C41] mt-[2px]" />
          </div>
          {tabs.map(t => (
            <React.Fragment key={t.t}>
              <div className="mx-[5px] w-px h-[18px] bg-[#CFCFCF]" />
              <div className={`${t.w} ${t.c} h-[30px] mt-[2px] rounded-[5px] flex items-center justify-center shrink-0`}>{t.t}</div>
            </React.Fragment>
          ))}
          <div className="mx-[5px] w-px h-[18px] bg-[#CFCFCF]" />
          <div className="w-[6px] h-[30px] mt-[2px] bg-[#D6856A] rounded-l-[5px]" />
          <svg width="14" height="4" viewBox="0 0 14 4" className="ml-[12px]"><path d="M2 2h.01M7 2h.01M12 2h.01" stroke="#444" strokeWidth="3" strokeLinecap="round" /></svg>
          <svg width="15" height="15" viewBox="0 0 15 15" className="ml-[26px]"><path d="M7.500 0v15M0 7.500h15" stroke="#333" strokeWidth="1.300" /></svg>
          <svg width="4" height="16" viewBox="0 0 4 16" className="ml-[30px]"><path d="M2 0v3M2 6v3M2 12v3" stroke="#A0A0A0" strokeWidth="2.500" /></svg>
          <div className="ml-[18px] w-[719px] h-[22px] bg-[#F5F5F5] rounded-full flex items-center pl-[6px]">
            <svg width="7" height="11" viewBox="0 0 7 11"><path d="M7 0v11L0 5.500z" fill="#707070" /></svg>
            <div className="ml-[8px] w-[641px] h-[11px] rounded-full bg-[#707070]" />
            <svg width="9" height="11" viewBox="0 0 9 11" className="ml-[44px]"><path d="M0 0v11l9-5.500z" fill="#707070" /></svg>
          </div>
        </div>

        {/* status bar */}
        <div className="h-[28px] shrink-0 bg-[#F3F3F3] flex items-center text-[12px] text-[#444]">
          <span className="ml-[9px]">Ready</span>
          <svg width="18" height="18" viewBox="0 0 18 18" fill="none" className="ml-[25px]" stroke="#444"><rect x="1" y="1" width="14" height="15" /><path d="M1 4h14M4 7h2M4 10h2M4 13h2" /><circle cx="11" cy="11" r="4" fill="#F3F3F3" /><circle cx="11" cy="11" r="1.500" fill="#444" /></svg>
          <svg width="18" height="20" viewBox="0 0 18 20" fill="none" className="ml-[23px]" stroke="#444"><circle cx="8" cy="3" r="2" /><path d="M1 5l5 2h4l5-2M6 7v5l-3 7M10 7v4M11 13l6 6M17 13l-6 6" /></svg>
          <span className="ml-[3px]">Accessibility: Investigate</span>
          <div className="ml-auto flex items-center">
            <div className="w-[50px] h-[27px] bg-[#DFDFDF] flex items-center justify-center">
              <svg width="17" height="17" viewBox="0 0 17 17" fill="none" stroke="#444" strokeWidth="1.200"><rect x=".6" y=".6" width="15.800" height="15.800" /><path d="M6 1v15M11 1v15M1 6h15M1 11h15" /></svg>
            </div>
            <svg width="18" height="17" viewBox="0 0 18 17" fill="none" stroke="#444" strokeWidth="1.200" className="ml-[16px]"><rect x=".6" y=".6" width="16.800" height="15.800" /><rect x="4" y="3.500" width="10" height="10" /><path d="M6 6.500h6M6 8.500h6M6 10.500h6" /></svg>
            <svg width="18" height="17" viewBox="0 0 18 17" fill="none" stroke="#444" strokeWidth="1.200" className="ml-[32px]"><rect x=".6" y=".6" width="16.800" height="15.800" /><path d="M1 10h10V1M6 1v9" /></svg>
            <svg width="9" height="2" viewBox="0 0 9 2" className="ml-[23px]"><path d="M0 1h9" stroke="#333" strokeWidth="1.200" /></svg>
            <div className="ml-[7px] w-[125px] h-[1px] bg-[#666] relative">
              <div className="absolute left-[60px] top-[-7px] w-[6px] h-[14px] bg-[#666]" />
            </div>
            <svg width="10" height="10" viewBox="0 0 10 10" className="ml-[6px]"><path d="M5 0v10M0 5h10" stroke="#333" strokeWidth="1" /></svg>
            <span className="ml-[16px] mr-[11px] w-[31px]">100%</span>
          </div>
        </div>
        <div className="flex-1 bg-black" />
      </div>
    </div>
  );
}
